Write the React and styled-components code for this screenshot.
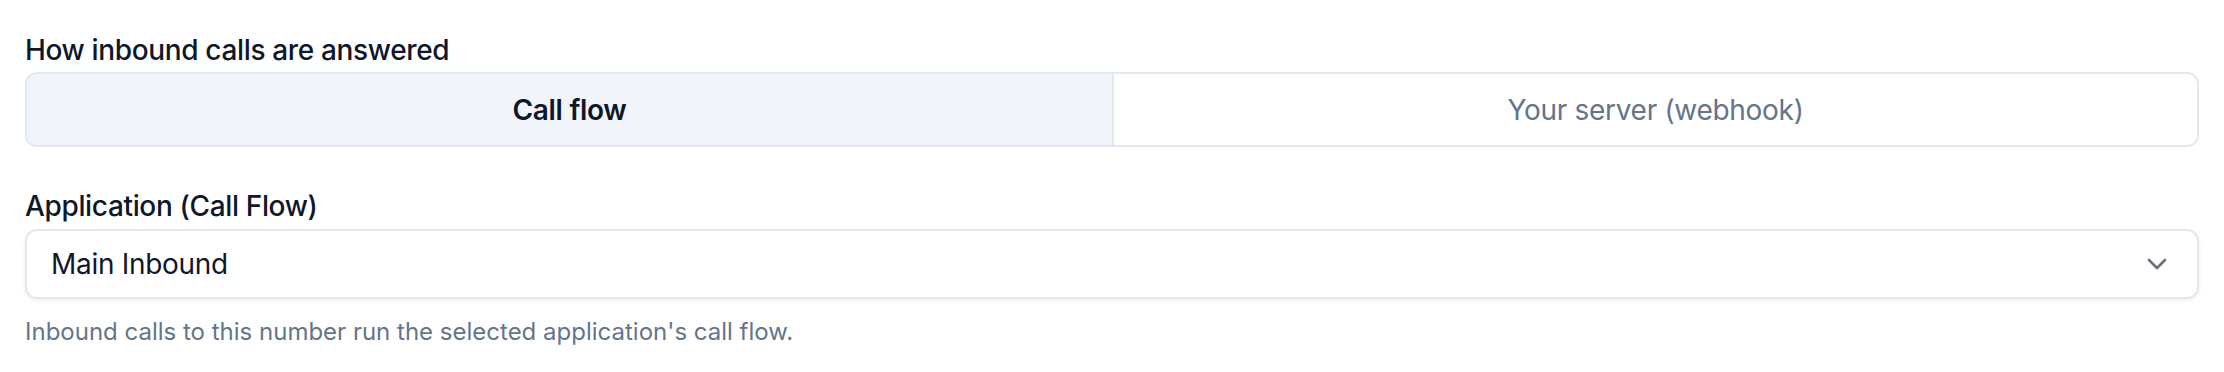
import { useState } from "react";
import styled, { createGlobalStyle } from "styled-components";
import { ChevronDown } from "lucide-react";

const GlobalStyle = createGlobalStyle`
  html, body {
    margin: 0;
    padding: 0;
    background: #ffffff;
  }
  body {
    font-family: Inter, "Noto Sans", "Liberation Sans", sans-serif;
    color: #0f172a;
    -webkit-font-smoothing: antialiased;
  }
`;

const modes = [
  { id: "flow", label: "Call flow" },
  { id: "webhook", label: "Your server (webhook)" },
];

export default function App() {
  const [mode, setMode] = useState("flow");

  return (
    <>
      <GlobalStyle />
      <Page>
        <Field>
          <FieldLabel>How inbound calls are answered</FieldLabel>
          <Segmented>
            {modes.map((m) => (
              <SegmentButton
                key={m.id}
                type="button"
                $active={mode === m.id}
                onClick={() => setMode(m.id)}
              >
                {m.label}
              </SegmentButton>
            ))}
          </Segmented>
        </Field>

        <Field>
          <FieldLabel>Application (Call Flow)</FieldLabel>
          <SelectBox type="button">
            <span>Main Inbound</span>
            <Chevron size={32} strokeWidth={2} />
          </SelectBox>
          <HelpText>
            Inbound calls to this number run the selected application's call
            flow.
          </HelpText>
        </Field>
      </Page>
    </>
  );
}

const Page = styled.div`
  display: flex;
  flex-direction: column;
  gap: 45px;
  padding: 36px 25px 0 25px;
`;

const Field = styled.div`
  display: flex;
  flex-direction: column;
  gap: 8px;
`;

const FieldLabel = styled.label`
  font-size: 28px;
  line-height: 28px;
  font-weight: 500;
  letter-spacing: -0.35px;
  color: #0f172a;
`;

const Segmented = styled.div`
  display: grid;
  grid-template-columns: 1fr 1fr;
  height: 75px;
  box-sizing: border-box;
  border: 2px solid #e2e8f0;
  border-radius: 12px;
  overflow: hidden;
`;

const SegmentButton = styled.button`
  border: none;
  margin: 0;
  padding: 0;
  font-family: inherit;
  font-size: 28px;
  letter-spacing: -0.3px;
  cursor: pointer;
  background: ${(p) => (p.$active ? "#f1f5f9" : "#ffffff")};
  color: ${(p) => (p.$active ? "#0f172a" : "#64748b")};
  font-weight: ${(p) => (p.$active ? 600 : 400)};

  & + & {
    border-left: 2px solid #e2e8f0;
  }
`;

const SelectBox = styled.button`
  display: flex;
  align-items: center;
  justify-content: space-between;
  height: 70px;
  box-sizing: border-box;
  margin-top: 1px;
  padding: 0 24px;
  border: 2px solid #e2e8f0;
  border-radius: 12px;
  background: #ffffff;
  box-shadow: 0 2px 4px rgba(15, 23, 42, 0.06);
  font-family: inherit;
  font-size: 28px;
  letter-spacing: -0.3px;
  color: #0f172a;
  text-align: left;
  cursor: pointer;
`;

const Chevron = styled(ChevronDown)`
  color: #6b7280;
  flex-shrink: 0;
`;

const HelpText = styled.p`
  margin: 9px 0 0 0;
  font-size: 24px;
  line-height: 32px;
  color: #64748b;
`;
